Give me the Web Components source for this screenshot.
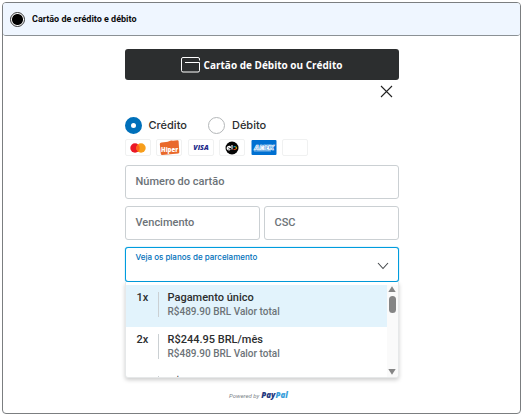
<!DOCTYPE html>
<html lang="pt-BR">
<head>
<meta charset="utf-8">
<meta name="viewport" content="width=device-width, initial-scale=1">
<title>Cartão de crédito e débito</title>
<style>
  body { margin: 0; background: #fff; color: #2c2e2f; font-family: Roboto, "Liberation Sans", sans-serif; }
</style>
</head>
<body>
<payment-panel heading="Cartão de crédito e débito">
  <card-button>Cartão de Débito ou Crédito</card-button>
  <close-button></close-button>
  <card-type></card-type>
  <card-brands></card-brands>
  <field-row><text-field name="number" label="Número do cartão"></text-field></field-row>
  <field-row>
    <text-field name="expiry" label="Vencimento"></text-field>
    <text-field name="csc" label="CSC"></text-field>
  </field-row>
  <plan-select label="Veja os planos de parcelamento">
    <plan-option selected times="1x" price="Pagamento único" total="R$489.90 BRL Valor total"></plan-option>
    <plan-option times="2x" price="R$244.95 BRL/mês" total="R$489.90 BRL Valor total"></plan-option>
    <plan-option times="3x" price="R$163.30 BRL/mês"></plan-option>
  </plan-select>
  <powered-by></powered-by>
</payment-panel>

<script>
const define = (name, render, setup) => customElements.define(name, class extends HTMLElement {
  constructor() {
    super();
    this.attachShadow({ mode: "open" });
  }
  connectedCallback() {
    if (this.shadowRoot.firstChild) return;
    const template = document.createElement("template");
    template.innerHTML = "<style>:host,*{box-sizing:border-box}</style>" + render(this);
    this.shadowRoot.append(template.content.cloneNode(true));
    if (setup) setup(this, this.shadowRoot);
  }
});
const attr = (el, name) => el.getAttribute(name) || "";

define("payment-panel", el => `
<style>
  :host { display: block; margin: 2px 2px 0; border: 1px solid #7b7e80; border-radius: 4px; background: #fff; }
  label { display: flex; align-items: center; gap: 7px; height: 33px; padding: 0 7px; background: #eff6ff;
    border-bottom: 1px solid #8b9195; border-radius: 3px; color: #0b0b0c; font-size: 9px; font-weight: 700; }
  input { appearance: none; flex: none; width: 15px; height: 15px; margin: 0; border: 1px solid #333; border-radius: 50%;
    background: radial-gradient(circle, #000 0 5px, #fff 6px); }
  main { display: flex; flex-direction: column; width: 53%; min-width: 240px; margin: 0 auto; padding: 13px 0 12px; }
</style>
<label><input type="radio" name="method" checked>${attr(el, "heading")}</label>
<main><slot></slot></main>`);

define("card-button", () => `
<style>
  :host { display: block; }
  button { display: flex; align-items: center; justify-content: center; gap: 3px; width: 100%; height: 31px; padding: 0;
    border: 0; border-radius: 3px; background: #2c2e2f; color: #fff; font: 700 10px "Open Sans", sans-serif; }
</style>
<button type="button">
  <svg width="20" height="16" viewBox="0 0 20 16" fill="none" stroke="#fff" aria-hidden="true">
    <path d="M18.500 3.500V2Q18.500.5 17 .5H2Q.5.5.5 2V13.500Q.5 15 2 15H17Q18.500 15 18.500 13.500V5.500H4"/>
  </svg>
  <slot></slot>
</button>`);

define("close-button", () => `
<style>
  :host { display: flex; justify-content: flex-end; padding: 5px 6px 0 0; }
  button { display: block; padding: 0; border: 0; background: none; color: #222; }
  svg { display: block; }
</style>
<button type="button" aria-label="Fechar">
  <svg width="13" height="13" viewBox="0 0 13 13" fill="none" stroke="currentColor" stroke-width="1.100" aria-hidden="true"><path d="M1 1L12 12M12 1L1 12"/></svg>
</button>`);

define("card-type", () => `
<style>
  :host { display: block; padding-top: 18px; }
  fieldset { display: flex; gap: 21px; margin: 0; padding: 0; border: 0; }
  label { display: flex; align-items: center; gap: 7px; height: 18px; font: 500 11px Inter, sans-serif; }
  input { appearance: none; width: 17px; height: 17px; margin: 0; border: 1px solid #b4b7b9; border-radius: 50%; background: #fff; }
  input:checked { border: 6px solid #0070ba; }
</style>
<fieldset aria-label="Tipo de cartão">
  <label><input type="radio" name="type" checked>Crédito</label>
  <label><input type="radio" name="type">Débito</label>
</fieldset>`);

define("card-brands", () => `
<style>
  :host { display: flex; justify-content: space-between; width: 184px; padding: 5px 0 2px; }
  span { display: flex; align-items: center; justify-content: center; width: 26px; height: 17px;
    border: 1px solid #f0f1f1; border-radius: 2px; background: #fff; }
  span.plain { border: 0; }
  svg { display: block; }
  text { font-family: "Open Sans", sans-serif; font-weight: 800; text-anchor: middle; }
</style>
<span><svg width="16" height="10" viewBox="0 0 16 10" role="img" aria-label="Mastercard">
  <circle cx="5" cy="5" r="4.700" fill="#eb1826"/><circle cx="11" cy="5" r="4.700" fill="#f79e1b"/><path d="M8 1.400a4.700 4.700 0 0 1 0 7.200a4.700 4.700 0 0 1 0-7.200" fill="#ff6319"/></svg></span>
<span><svg width="22" height="15" viewBox="0 0 22 15" role="img" aria-label="Hiper">
  <path d="M3.500 2.500L8 2Q10 1.900 11 1.200Q13 .2 15 .8L19.500.3Q20.500.2 20.600 1.300L21.300 12Q21.400 13.300 20.200 13.500L4.200 15Q3 15 2.800 14L1.800 4Q1.700 2.700 3.500 2.500Z" fill="#e9692c"/>
  <text x="11.500" y="11.500" font-size="6" fill="#fff">Hiper</text></svg></span>
<span><svg width="20" height="9" viewBox="0 0 20 9" role="img" aria-label="Visa"><text x="10" y="7" font-size="7" font-style="italic" fill="#23298b">VISA</text></svg></span>
<span><svg width="14" height="14" viewBox="0 0 14 14" role="img" aria-label="Elo"><circle cx="7" cy="7" r="6.500" fill="#050505"/>
  <g fill="none" stroke-width="1.100"><path d="M5.300 8.400A1.800 1.800 0 1 1 5.500 6.200L2.400 7.700" stroke="#fff"/><path d="M7 4V8.500" stroke="#fff"/>
  <path d="M8.500 6.200A1.700 1.700 0 0 1 10.500 5.600" stroke="#00a4e0"/><path d="M10.500 5.600A1.700 1.700 0 0 1 11 8" stroke="#ffcb05"/><path d="M11 8A1.700 1.700 0 0 1 8.500 8" stroke="#ef4123"/></g></svg></span>
<span class="plain"><svg width="26" height="17" viewBox="0 0 26 17" role="img" aria-label="Amex"><rect x=".5" y="1" width="25" height="15" rx="1" fill="#0070d1"/>
  <text x="13" y="11" font-size="7" font-style="italic" fill="#0070d1" stroke="#fff" stroke-width=".7">AMEX</text><path d="M3 12H20" stroke="#fff" stroke-width=".5"/></svg></span>
<span></span>`);

define("field-row", () => `
<style>
  :host { display: flex; gap: 4px; padding-top: 7px; }
</style>
<slot></slot>`);

define("text-field", el => `
<style>
  :host { display: block; flex: 1 1 0; min-width: 0; }
  label { display: flex; align-items: center; gap: 4px; height: 34px; padding: 0 10px 2px;
    border: 1px solid #cbd0d3; border-radius: 3px; background: #fff; color: #6c7378; font-size: 11px; font-weight: 500; }
  input { flex: 1; min-width: 0; padding: 0; border: 0; outline: 0; background: none; font: inherit; color: #2c2e2f; }
</style>
<label>${attr(el, "label")}<input type="text" name="${attr(el, "name")}" autocomplete="off"></label>`);

define("plan-select", el => `
<style>
  :host { display: block; padding-top: 7px; }
  .control { display: grid; height: 35px; border: 1px solid #009cde; border-radius: 3px; box-shadow: 0 0 1px #009cde; background: #fff; }
  .control > * { grid-area: 1 / 1; }
  label { padding: 3px 10px; color: #0070ba; font: 500 8px/12px Inter, sans-serif; }
  select { appearance: none; width: 100%; height: 100%; padding: 12px 30px 0 10px; border: 0; outline: 0; background: none; font: inherit; font-size: 11px; }
  .chevron { align-self: center; justify-self: end; margin: 3px 9px 0 0; pointer-events: none; }
  .menu { display: flex; height: 96px; padding: 3px 0 0; border: 1px solid #e6e8e9; border-top: 0; border-radius: 0 0 3px 3px;
    box-shadow: 0 2px 4px #0003; overflow: hidden; background: #fff; }
  .list { flex: 1; overflow-y: auto; scrollbar-width: none; }
  .bar { display: flex; flex-direction: column; align-items: center; width: 11px; padding: 1px 0 2px; background: #fafafa; }
  .thumb { width: 7px; height: 17px; margin-top: 4px; border-radius: 4px; background: #858585; }
  .bar svg { display: block; }
  .down { margin-top: auto; }
</style>
<div class="control">
  <label for="plan">${attr(el, "label")}</label>
  <select id="plan"><option value="" selected></option><option>1x</option><option>2x</option><option>3x</option></select>
  <svg class="chevron" width="12" height="8" viewBox="0 0 12 8" fill="none" stroke="#45494c" stroke-width="1.100" aria-hidden="true"><path d="M1 1L6 6.500L11 1"/></svg>
</div>
<div class="menu">
  <div class="list" role="listbox" aria-label="${attr(el, "label")}"><slot></slot></div>
  <div class="bar" aria-hidden="true">
    <svg width="8" height="6" viewBox="0 0 8 6" fill="#858585"><path d="M4 .3L7.700 6H.3Z"/></svg>
    <div class="thumb"></div>
    <svg class="down" width="8" height="6" viewBox="0 0 8 6" fill="#858585"><path d="M4 5.700L7.700 0H.3Z"/></svg>
  </div>
</div>`);

define("plan-option", el => `
<style>
  :host { display: flex; align-items: flex-start; height: 42px; padding: 6px 0 0 11px; font-weight: 500; }
  :host([selected]) { background: #e2f3fc; }
  .times { width: 21px; font-size: 11px; line-height: 14px; }
  .text { padding-left: 9px; white-space: nowrap; }
  .rule { width: 1px; height: 25px; margin-top: 1px; background: #cbd0d3; }
  .price { font-size: 11px; line-height: 14px; }
  .total { color: #6c7378; font-size: 10px; line-height: 13px; }
</style>
<div class="times">${attr(el, "times")}</div><div class="rule"></div>
<div class="text"><div class="price">${attr(el, "price")}</div><div class="total">${attr(el, "total")}</div></div>`,
el => { el.setAttribute("role", "option"); el.setAttribute("aria-selected", String(el.hasAttribute("selected"))); });

define("powered-by", () => `
<style>
  :host { display: flex; align-items: baseline; justify-content: center; gap: 2px; padding: 11px 6px 0 0; line-height: 11px; font-style: italic; }
  small { color: #7b8287; font-size: 6px; }
  b { color: #253b80; font: italic 800 8px/11px "Open Sans", sans-serif; }
  b span { color: #3a9fdb; }
</style>
<small>Powered by</small><b>Pay<span>Pal</span></b>`);
</script>
</body>
</html>
